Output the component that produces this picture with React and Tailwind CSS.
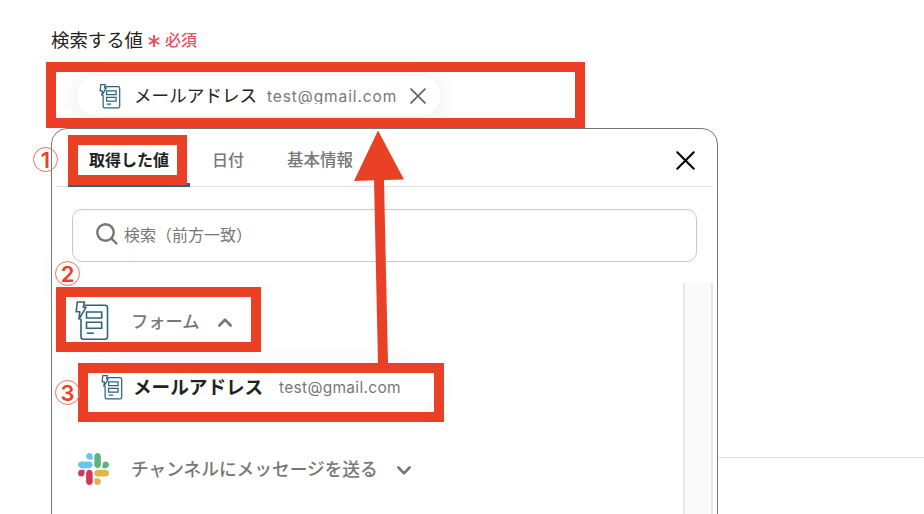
const FormIcon = ({ className }) => (
  <svg
    viewBox="0 0 34 40"
    fill="none"
    stroke="#2c6480"
    strokeLinejoin="round"
    className={className}
  >
    <path d="M9.5 4.2H30a2.5 2.5 0 0 1 2.5 2.5v29a2.5 2.5 0 0 1-2.5 2.5H8.5A2.5 2.5 0 0 1 6 35.7V17.5" />
    <path d="M2.3 1h7.2L8.3 6.3H11L4 18.2l.8-7.4H1.2z" />
    <path strokeLinejoin="miter" d="M11.5 11h15.2v6H11.5zM11.5 21.2h15.2v6H11.5z" />
    <path d="M11.8 32.2h7" />
  </svg>
);

const SlackIcon = () => (
  <svg viewBox="0 0 122.8 122.8" className="h-8 w-[31px] shrink-0" preserveAspectRatio="none">
    <path
      fill="#cf375c"
      d="M25.8 77.6c0 7.1-5.8 12.9-12.9 12.9S0 84.7 0 77.6s5.8-12.9 12.9-12.9h12.9zM32.3 77.6c0-7.1 5.8-12.9 12.9-12.9s12.9 5.8 12.9 12.9v32.3c0 7.1-5.8 12.9-12.9 12.9s-12.9-5.8-12.9-12.9z"
    />
    <path
      fill="#66c5ef"
      d="M45.2 25.8c-7.1 0-12.9-5.8-12.9-12.9S38.1 0 45.2 0s12.9 5.8 12.9 12.9v12.9zM45.2 32.3c7.1 0 12.9 5.8 12.9 12.9s-5.8 12.9-12.9 12.9H12.9C5.8 58.1 0 52.3 0 45.2s5.8-12.9 12.9-12.9z"
    />
    <path
      fill="#5bb381"
      d="M97 45.2c0-7.1 5.8-12.9 12.9-12.9s12.9 5.8 12.9 12.9-5.8 12.9-12.9 12.9H97zM90.5 45.2c0 7.1-5.8 12.9-12.9 12.9s-12.9-5.8-12.9-12.9V12.9C64.7 5.8 70.5 0 77.6 0s12.9 5.8 12.9 12.9z"
    />
    <path
      fill="#e4b34b"
      d="M77.6 97c7.1 0 12.9 5.8 12.9 12.9s-5.8 12.9-12.9 12.9-12.9-5.8-12.9-12.9V97zM77.6 90.5c-7.1 0-12.9-5.8-12.9-12.9s5.8-12.9 12.9-12.9h32.3c7.1 0 12.9 5.8 12.9 12.9s-5.8 12.9-12.9 12.9z"
    />
  </svg>
);

const CloseIcon = ({ className }) => (
  <svg viewBox="0 0 18 18" fill="none" stroke="currentColor" strokeLinecap="round" className={className}>
    <path d="M1.2 1.2l15.6 15.6M16.8 1.2L1.2 16.8" />
  </svg>
);

const Chevron = ({ className }) => (
  <svg
    viewBox="0 0 14 9"
    fill="none"
    stroke="#777"
    strokeWidth="2.6"
    strokeLinecap="round"
    strokeLinejoin="round"
    className={className}
  >
    <path d="M1.4 1.5L7 7.3l5.6-5.8" />
  </svg>
);

const SearchIcon = () => (
  <svg
    viewBox="0 0 22 22"
    fill="none"
    stroke="#757575"
    strokeWidth="2.4"
    strokeLinecap="round"
    className="mb-1 size-[22px] shrink-0"
  >
    <circle cx="9.5" cy="9.5" r="8.2" />
    <path d="M15.6 15.6l4.9 4.9" />
  </svg>
);

const Mark = ({ className, children }) => (
  <span
    className={`absolute flex size-[25px] items-center justify-center rounded-full border-[1.5px] border-[#f0705a] font-['Inter','Noto_Sans_CJK_JP',sans-serif] text-[22px] leading-none font-semibold text-[#ea4025] ${className}`}
  >
    {children}
  </span>
);

const Annotations = () => (
  <div className="pointer-events-none absolute inset-0">
    <div className="absolute top-[62px] left-[46px] h-[66px] w-[539px] border-10 border-[#ea4025]" />
    <div className="absolute top-[135px] left-[68px] h-[50px] w-[119px] border-10 border-[#ea4025]" />
    <div className="absolute top-[287px] left-[56px] h-[65px] w-[205px] border-10 border-[#ea4025]" />
    <svg viewBox="0 0 50 234" className="absolute top-[130px] left-[354px] h-[234px] w-[50px]">
      <path fill="#ea4025" d="M24 0.5L50 49.5 30 50l4 184h-10L20 50.3 0 51z" />
    </svg>
    <div className="absolute top-[363px] left-[78px] h-[59px] w-[366px] border-10 border-[#ea4025]" />
    <Mark className="top-[147px] left-[33px]">1</Mark>
    <Mark className="top-[261px] left-[55px]">2</Mark>
    <Mark className="top-[380px] left-[55px]">3</Mark>
  </div>
);

export default function App() {
  return (
    <div className="relative h-[514px] w-[924px] overflow-hidden bg-white font-['Noto_Sans_CJK_JP',sans-serif] text-[#222]">
      <div className="flex h-[76px] items-start pt-[26px] pl-[51px]">
        <span className="text-[18.4px] leading-[27px]">検索する値</span>
        <svg
          viewBox="0 0 12 12"
          stroke="#ee4f5e"
          strokeWidth="1.9"
          className="mt-[9px] ml-[5px] size-3"
        >
          <path d="M6 0v12M0.8 3l10.4 6M11.2 3L0.8 9" />
        </svg>
        <span className="ml-[5px] text-[16px] leading-[27px] font-medium text-[#ee4f5e]">必須</span>
      </div>

      <div className="ml-[77px] flex h-10 w-[363px] items-center rounded-full bg-white pl-[22px] shadow-[0_2px_24px_rgba(0,0,0,0.09)]">
        <FormIcon className="h-[25px] w-[22px] shrink-0 stroke-[2]" />
        <span className="mb-[3px] ml-[13px] w-[123px] text-[17.6px] leading-6 whitespace-nowrap">
          メールアドレス
        </span>
        <span className="ml-[10px] h-4 w-[131px] overflow-hidden font-['Inter',sans-serif] text-[15.5px] leading-[18px] tracking-[0.9px] whitespace-nowrap text-[#777]">
          test@gmail.com
        </span>
        <CloseIcon className="ml-[12px] size-4 shrink-0 stroke-2 text-[#666]" />
      </div>

      <div className="relative mt-3 flex items-start">
        <div className="absolute top-[130px] left-[52px] h-9 w-20 rounded-full shadow-[0_2px_26px_rgba(0,0,0,0.06)]" />
        <div className="relative ml-[51px] h-[400px] w-[667px] shrink-0 rounded-t-[16px] border border-[#777] bg-white">
          <div className="mr-1 ml-[5px] flex h-[58px] items-center border-b border-[#e3e3e3] text-[16px] text-[#777]">
            <div className="mt-[8px] ml-[11px] flex h-[50px] w-[122px] shrink-0 items-start rounded-tr border-b-4 border-[#2c6480] pt-[10px] pl-[21px] leading-6 font-bold whitespace-nowrap text-[#222]">
              取得した値
            </div>
            <span className="ml-[22px] pt-[3px] font-medium">日付</span>
            <span className="ml-[43px] pt-[3px] text-[16.5px] font-medium">基本情報</span>
            <CloseIcon className="mt-[6px] mr-[18px] ml-auto size-[19px] stroke-2 text-black" />
          </div>

          <div className="mt-[22px] ml-5 flex h-[53px] w-[625px] items-center rounded-[10px] border border-[#c8c8c8] pl-[23px]">
            <SearchIcon />
            <span className="mb-[3px] ml-[6px] text-[16px] text-[#777]">検索（前方一致）</span>
          </div>

          <div className="mt-[21px] mr-1 flex h-[240px] justify-between">
            <div className="flex flex-col">
              <div className="flex h-[76px] items-center pl-[23px]">
                <FormIcon className="h-10 w-[34px] shrink-0 stroke-[1.6]" />
                <span className="ml-[22px] text-[17.3px] font-medium text-[#777]">フォーム</span>
                <Chevron className="mt-[2px] ml-[18px] h-[9px] w-[14px] rotate-180" />
              </div>
              <div className="mt-[5px] ml-[30px] flex h-[47px] w-[355px] items-center rounded-3xl bg-white pl-[19px] shadow-[0_2px_24px_rgba(0,0,0,0.07)]">
                <FormIcon className="h-[25px] w-[22px] shrink-0 stroke-[2]" />
                <span className="mb-[3px] ml-[10px] w-[131px] text-[18.6px] leading-6 font-bold whitespace-nowrap">
                  メールアドレス
                </span>
                <span className="ml-[15px] font-['Inter',sans-serif] text-[15.5px] tracking-[0.3px] text-[#777]">
                  test@gmail.com
                </span>
              </div>
              <div className="mt-[42px] flex h-8 items-center pl-[26px]">
                <SlackIcon />
                <span className="mb-[2px] ml-[22px] text-[17.7px] font-medium text-[#777]">
                  チャンネルにメッセージを送る
                </span>
                <Chevron className="mt-[2px] ml-[19px] h-[9px] w-[14px]" />
              </div>
            </div>
            <div className="w-[30px] border-x-2 border-[#e7e7e7] bg-[#fafafa]" />
          </div>
        </div>
        <div className="mt-[329px] h-px flex-1 bg-[#e3e3e3]" />
      </div>

      <Annotations />
    </div>
  );
}
